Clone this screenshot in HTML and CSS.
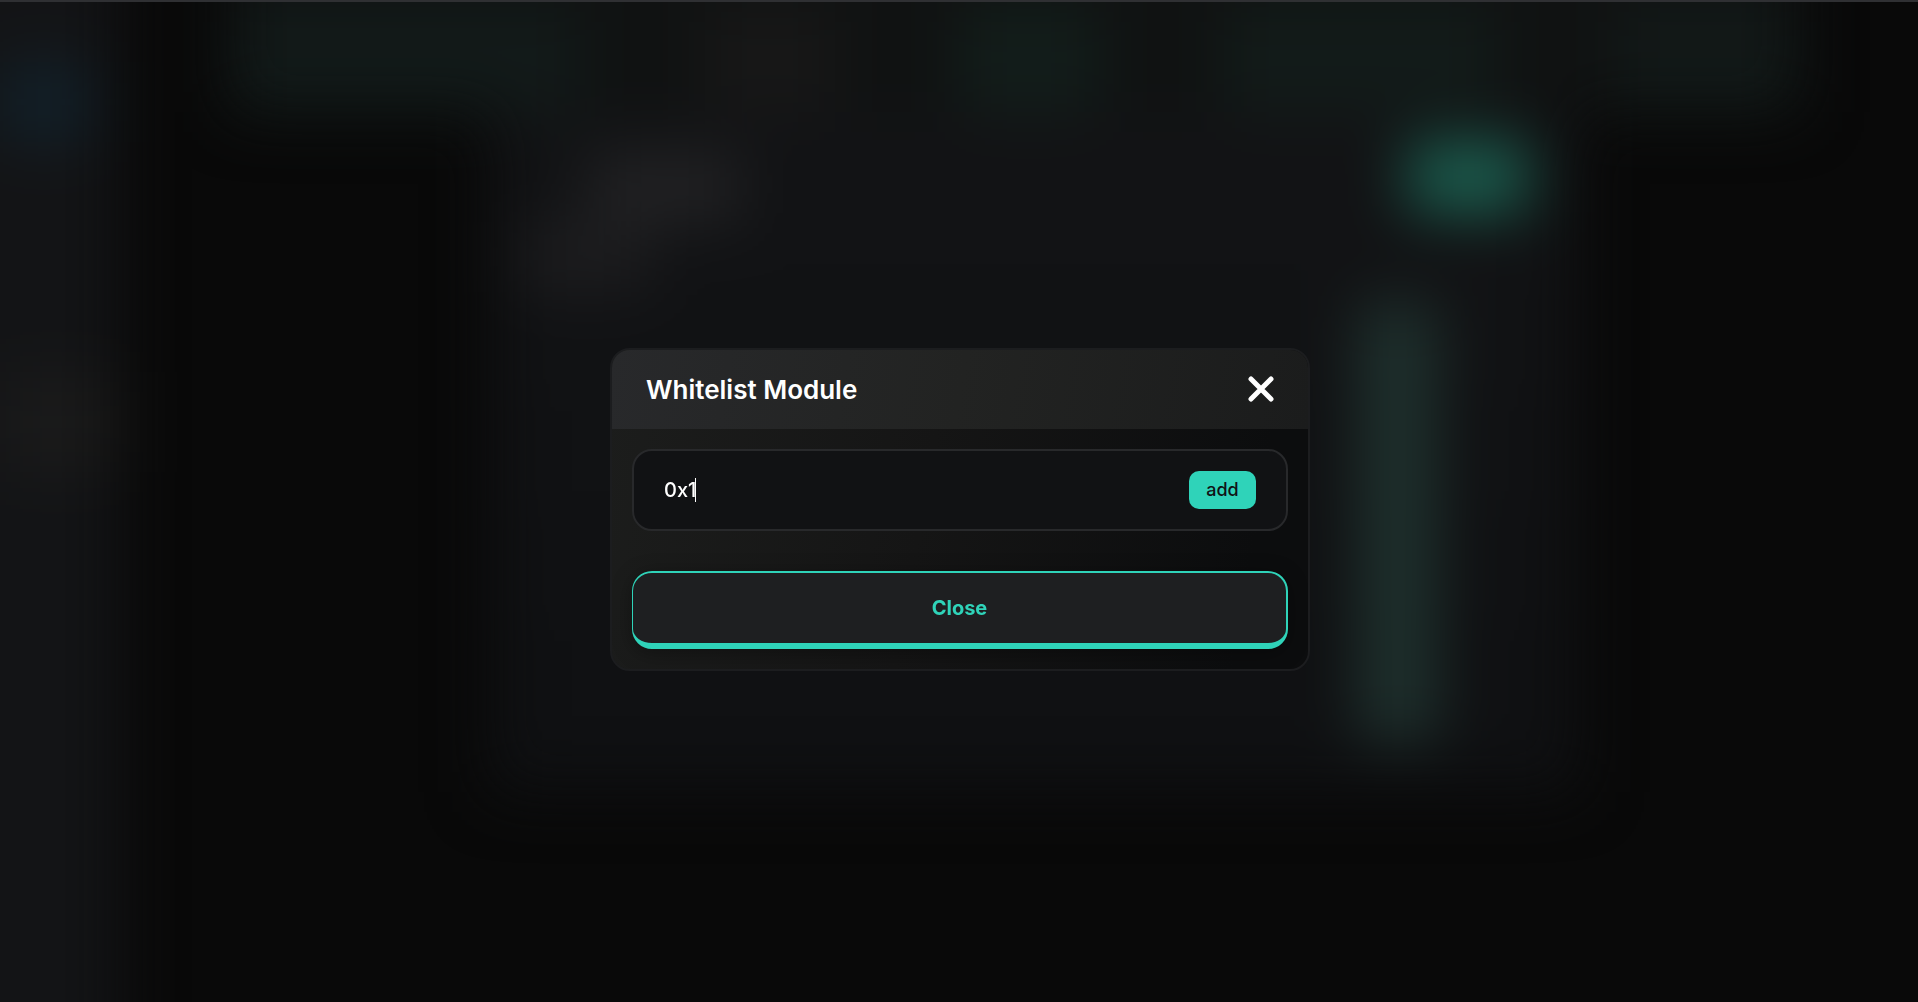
FILE: index.html
```html
<!DOCTYPE html>
<html lang="en">
<head>
    <meta charset="UTF-8">
    <meta name="viewport" content="width=device-width, initial-scale=1.0">
    <title>Whitelist Module</title>
    <link rel="stylesheet" href="styles.css">
</head>
<body>
    <!-- Blurred page behind the modal -->
    <div class="backdrop" aria-hidden="true">
        <div class="scene">
            <div class="sidebar">
                <div class="side-logo"></div>
                <div class="side-item"></div>
            </div>
            <div class="main">
                <div class="topbar">
                    <div class="stat stat-wide"></div>
                    <div class="stat stat-gray"></div>
                    <div class="stat"></div>
                    <div class="stat stat-mid"></div>
                    <div class="stat stat-account"></div>
                </div>
                <div class="panel">
                    <div class="panel-title">
                        <div class="title-line"></div>
                        <div class="subtitle-line"></div>
                    </div>
                    <div class="panel-side">
                        <div class="panel-button"></div>
                        <div class="panel-column"></div>
                    </div>
                </div>
            </div>
        </div>
    </div>

    <div class="overlay">
        <div class="modal" role="dialog" aria-labelledby="modalTitle">
            <div class="modal-header">
                <h2 id="modalTitle">Whitelist Module</h2>
                <button type="button" class="icon-button" aria-label="Close dialog">
                    <svg width="26" height="26" viewBox="0 0 26 26" fill="none" stroke="#fff" stroke-width="5" stroke-linecap="round">
                        <path d="M3 3L23 23M23 3L3 23"/>
                    </svg>
                </button>
            </div>
            <div class="modal-body">
                <div class="address-field">
                    <input type="text" id="moduleAddress" aria-label="Module address" value="0x1" autofocus>
                    <span class="caret"></span>
                    <button type="button" class="add-button">add</button>
                </div>
                <button type="button" class="close-button">Close</button>
            </div>
        </div>
    </div>
</body>
</html>
```
FILE: styles.css
```css
* {
    box-sizing: border-box;
}

body {
    margin: 0;
    min-height: 100vh;
    background-color: #090909;
    color: white;
    font-family: Inter, sans-serif;
}

button, input {
    font-family: inherit;
}

button {
    cursor: pointer;
}

/* Backdrop */
.backdrop {
    position: fixed;
    inset: 0;
    overflow: hidden;
    border-top: 2px solid #2f3033;
}

.scene {
    position: absolute;
    inset: -80px;
    display: grid;
    grid-template-columns: 200px 1fr;
    gap: 110px;
    filter: blur(30px);
}

.sidebar {
    padding-top: 140px;
    padding-left: 80px;
    background-color: #131416;
}

.side-logo {
    width: 90px;
    height: 80px;
    background-color: #122029;
}

.side-item {
    height: 100px;
    margin-top: 230px;
    background-color: #1a1a1a;
}

.main {
    padding-right: 200px;
}

.topbar {
    display: flex;
    justify-content: space-between;
    height: 190px;
    padding-top: 80px;
    background-color: #101212;
}

.stat {
    width: 140px;
    background-color: #121d1a;
}

.stat-wide {
    width: 350px;
    background-color: #121a19;
}

.stat-gray {
    width: 130px;
    background-color: #171717;
}

.stat-mid {
    width: 270px;
    background-color: #121b19;
}

.stat-account {
    width: 180px;
    background-color: #121918;
}

.panel {
    display: flex;
    justify-content: space-between;
    height: 680px;
    margin-left: 260px;
    margin-right: 220px;
    padding: 20px 30px;
    background: linear-gradient(#121315, #0f1012);
}

.title-line {
    width: 150px;
    height: 70px;
    margin-top: 20px;
    margin-left: 70px;
    background-color: #212123;
}

.subtitle-line {
    width: 130px;
    height: 70px;
    background-color: #1c1c1e;
}

.panel-side {
    width: 200px;
}

.panel-button {
    width: 120px;
    height: 70px;
    margin-top: 10px;
    margin-left: 60px;
    background-color: #1b5f50;
}

.panel-column {
    width: 80px;
    height: 440px;
    margin-top: 90px;
    margin-left: 10px;
    background-color: #1e302d;
}

/* Modal */
.overlay {
    position: relative;
    display: flex;
    align-items: center;
    justify-content: center;
    min-height: 100vh;
    padding: 36px 20px 20px 22px;
}

.modal {
    width: 100%;
    max-width: 700px;
    border: 2px solid #1c1d1f;
    border-radius: 20px;
    background: linear-gradient(100deg, #1c1d1c, #151515 45%, #0c0d0e 90%);
    overflow: hidden;
}

.modal-header {
    display: flex;
    align-items: center;
    justify-content: space-between;
    height: 79px;
    padding: 0 34px;
    background: linear-gradient(100deg, #28292b, #222322 50%, #1b1c1c);
}

.modal-header h2 {
    margin: 0;
    font-size: 26px;
    font-weight: 600;
}

.icon-button {
    display: flex;
    padding: 0;
    border: none;
    background: none;
}

.modal-body {
    display: flex;
    flex-direction: column;
    gap: 40px;
    padding: 20px;
}

.address-field {
    position: relative;
    display: flex;
    align-items: center;
    height: 82px;
    padding: 0 30px;
    border: 2px solid #28292b;
    border-radius: 20px;
    background-color: #111214;
}

.address-field input {
    flex: 1;
    min-width: 0;
    padding: 0;
    border: none;
    outline: none;
    background: none;
    color: white;
    caret-color: transparent;
    font-size: 20px;
    font-weight: 500;
}

.caret {
    position: absolute;
    top: 27px;
    left: 61px;
    width: 1px;
    height: 24px;
    background-color: white;
}

.add-button {
    width: 67px;
    height: 38px;
    padding: 0;
    border: none;
    border-radius: 10px;
    background-color: #2fd3b9;
    color: #111214;
    font-size: 18px;
    font-weight: 500;
}

.close-button {
    height: 78px;
    border: 2px solid #2fd3b9;
    border-left-width: 1px;
    border-bottom-width: 6px;
    border-radius: 20px;
    background-color: #1e1f21;
    box-shadow: 0 4px 20px rgba(0, 0, 0, 0.35);
    color: #2fd3b9;
    font-size: 20px;
    font-weight: 700;
}
```
